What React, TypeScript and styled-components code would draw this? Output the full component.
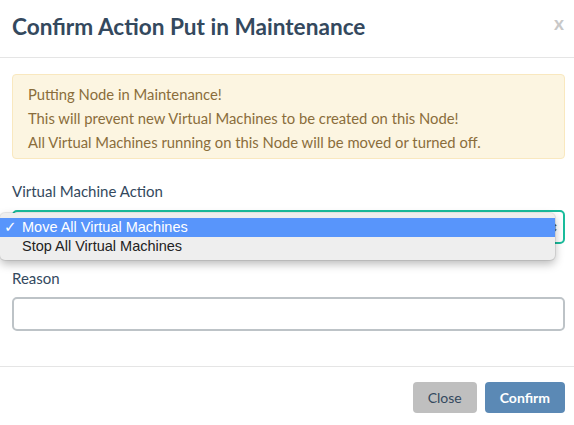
import React from "react";
import styled, { createGlobalStyle } from "styled-components";

const Global = createGlobalStyle`
  html, body { margin: 0; padding: 0; background: #fff; }
  body { font-family: Lato, "Open Sans", sans-serif; color: #34495e; }
  * { box-sizing: border-box; }
`;

const Modal = styled.div`
  width: 574px;
  height: 425px;
  background: #fff;
  display: flex;
  flex-direction: column;
`;

const Header = styled.div`
  height: 58px;
  border-bottom: 1px solid #e5e5e5;
  display: flex;
  align-items: center;
  justify-content: space-between;
  padding: 0 10px 4px 12px;
`;

const Title = styled.h4`
  margin: 0;
  font-size: 22.6px;
  font-weight: 700;
  color: #34495e;
`;

const CloseX = styled.span`
  font-size: 19px;
  font-weight: 700;
  color: #c8c8c8;
  margin-top: -8px;
`;

const Body = styled.div`
  padding: 16px 9px 0 12px;
  display: flex;
  flex-direction: column;
`;

const Alert = styled.div`
  background: #fcf5e1;
  border: 1px solid #f9e8bf;
  border-radius: 4px;
  color: #8a6d3b;
  font-size: 14.8px;
  line-height: 24px;
  padding: 7px 15px 9px;
  height: 85px;
`;

const Group = styled.div`
  margin-top: 22px;
  position: relative;
`;

const Label = styled.div`
  font-size: 15px;
  line-height: 20px;
  color: #34495e;
  margin-bottom: 9px;
`;

const SelectBox = styled.div<{ $focus?: boolean }>`
  height: 34px;
  border: 2px solid ${(p) => (p.$focus ? "#1abc9c" : "#bdc3c7")};
  border-radius: 5px;
  background: #fff;
  display: flex;
  align-items: center;
  justify-content: flex-end;
  padding-right: 4px;
  color: #555;
  font-size: 12px;
`;

const Menu = styled.div`
  position: absolute;
  left: -12px;
  top: 32px;
  width: 555px;
  background: #eeeeee;
  border-radius: 5px;
  box-shadow: 0 4px 10px rgba(0, 0, 0, 0.28), 0 0 0 1px rgba(0, 0, 0, 0.08);
  padding: 5px 0 4px;
  font-family: "Liberation Sans", Arial, sans-serif;
  font-size: 14.5px;
  color: #222;
`;

const Option = styled.div<{ $active?: boolean }>`
  height: 19px;
  line-height: 19px;
  padding-left: 22px;
  position: relative;
  background: ${(p) => (p.$active ? "#5895fb" : "transparent")};
  color: ${(p) => (p.$active ? "#fff" : "#222")};
`;

const Check = styled.span`
  position: absolute;
  left: 4px;
  top: 0;
  font-size: 15px;
  font-family: "DejaVu Sans", sans-serif;
`;

const Input = styled.div`
  height: 34px;
  border: 2px solid #bdc3c7;
  border-radius: 5px;
  background: #fff;
`;

const Footer = styled.div`
  margin-top: auto;
  border-top: 1px solid #e5e5e5;
  height: 59px;
  display: flex;
  justify-content: flex-end;
  align-items: flex-start;
  gap: 8px;
  padding: 15px 9px 0 0;
`;

const Button = styled.button<{ $primary?: boolean }>`
  height: 31px;
  border: none;
  border-radius: 4px;
  font-family: Lato, sans-serif;
  font-size: 14px;
  padding: 0 15px;
  background: ${(p) => (p.$primary ? "#5b89b5" : "#bfbfbf")};
  color: ${(p) => (p.$primary ? "#fff" : "#34495e")};
  font-weight: ${(p) => (p.$primary ? 700 : 400)};
`;

export default function App() {
  return (
    <>
      <Global />
      <Modal>
        <Header>
          <Title>Confirm Action Put in Maintenance</Title>
          <CloseX>x</CloseX>
        </Header>
        <Body>
          <Alert>
            Putting Node in Maintenance!
            <br />
            This will prevent new Virtual Machines to be created on this Node!
            <br />
            All Virtual Machines running on this Node will be moved or turned off.
          </Alert>
          <Group>
            <Label>Virtual Machine Action</Label>
            <SelectBox $focus>⇕</SelectBox>
            <Menu>
              <Option $active>
                <Check>✓</Check>Move All Virtual Machines
              </Option>
              <Option>Stop All Virtual Machines</Option>
            </Menu>
          </Group>
          <Group style={{ marginTop: 24 }}>
            <Label>Reason</Label>
            <Input />
          </Group>
        </Body>
        <Footer>
          <Button>Close</Button>
          <Button $primary>Confirm</Button>
        </Footer>
      </Modal>
    </>
  );
}
